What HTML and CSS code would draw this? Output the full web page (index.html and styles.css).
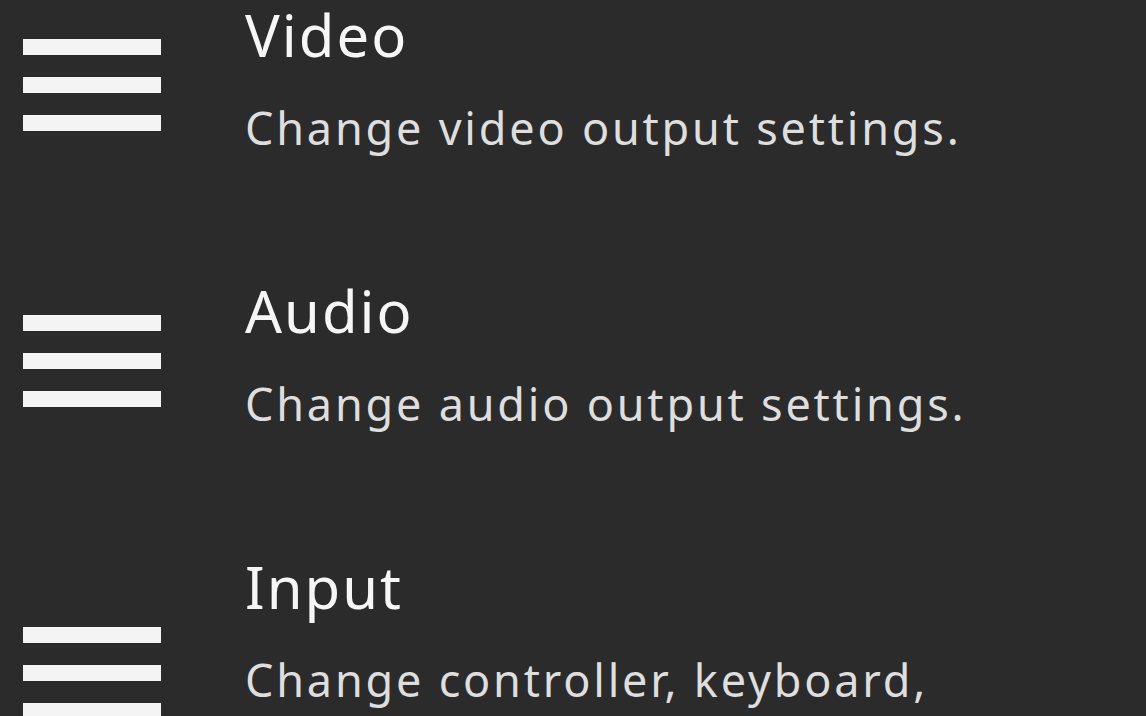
FILE: index.html
```html
<!DOCTYPE html>
<html lang="en">
<head>
<meta charset="utf-8">
<title>Settings</title>
<link rel="stylesheet" href="styles.css">
</head>
<body>
<ul class="menu">
  <li class="item">
    <div class="icon"><span></span><span></span><span></span></div>
    <div class="text">
      <div class="title">Video</div>
      <div class="desc">Change video output settings.</div>
    </div>
  </li>
  <li class="item">
    <div class="icon"><span></span><span></span><span></span></div>
    <div class="text">
      <div class="title">Audio</div>
      <div class="desc">Change audio output settings.</div>
    </div>
  </li>
  <li class="item">
    <div class="icon"><span></span><span></span><span></span></div>
    <div class="text">
      <div class="title">Input</div>
      <div class="desc">Change controller, keyboard,<br>and mouse settings.</div>
    </div>
  </li>
</ul>
</body>
</html>
```
FILE: styles.css
```css
html, body {
  margin: 0;
  padding: 0;
  background: #2b2b2b;
  overflow: hidden;
}
body {
  font-family: "Noto Sans", "Open Sans", sans-serif;
  width: 1146px;
  height: 716px;
}
.menu {
  list-style: none;
  margin: 0;
  padding: 0 0 0 23px;
  display: flex;
  flex-direction: column;
  gap: 112px;
}
.item {
  display: flex;
  align-items: center;
  gap: 84px;
}
.icon {
  width: 138px;
  margin-top: 6px;
  display: flex;
  flex-direction: column;
  gap: 22px;
  flex: none;
}
.icon span {
  display: block;
  height: 16px;
  background: #f4f4f4;
}
.text {
  display: flex;
  flex-direction: column;
  gap: 22px;
}
.title {
  font-size: 58px;
  line-height: 70px;
  letter-spacing: 2px;
  color: #f6f6f6;
}
.desc {
  font-size: 45px;
  line-height: 72px;
  letter-spacing: 2.8px;
  color: #dedede;
}
```
